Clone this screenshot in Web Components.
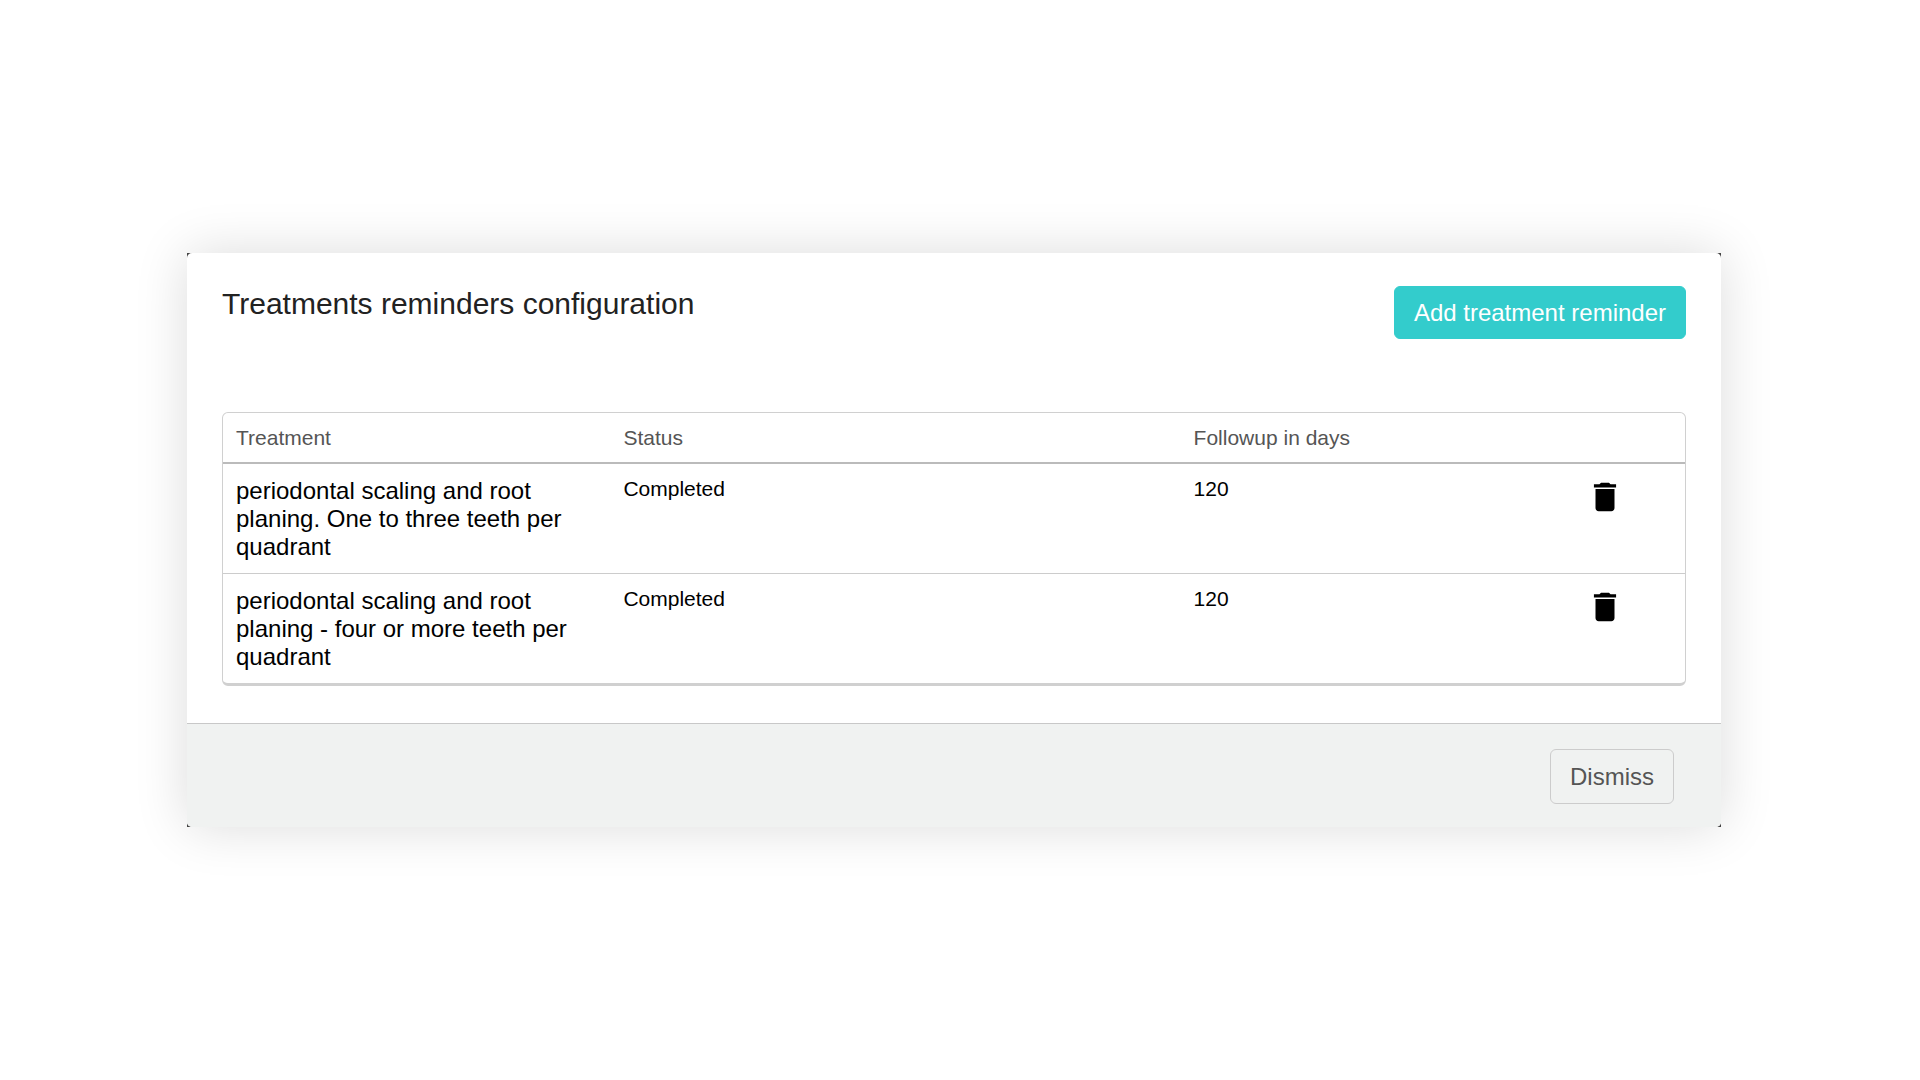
<!DOCTYPE html>
<html lang="en">
<head>
<meta charset="utf-8">
<title>Treatments reminders configuration</title>
<style>
  body { margin: 0; background: #fff; font-family: "Liberation Sans", Arial, sans-serif; }
</style>
</head>
<body>
<reminders-page>
  <modal-card>
    <span slot="title">Treatments reminders configuration</span>
    <action-button slot="action" variant="primary">Add treatment reminder</action-button>
    <reminder-table></reminder-table>
    <action-button slot="footer">Dismiss</action-button>
  </modal-card>
</reminders-page>

<template id="page-template">
  <style>
    :host { display: flex; flex-direction: column; justify-content: center; box-sizing: border-box; min-height: 100vh; padding: 24px 199px 24px 187px; }
  </style>
  <slot></slot>
</template>

<template id="card-template">
  <style>
    /* The dark host shows only behind the rounded corners of the card. */
    :host { display: block; background: #444; box-shadow: 0 0 50px rgba(0, 0, 0, .14); }
    section { border-radius: 5px; overflow: hidden; background: #fff; }
    .body { padding: 33px 35px 37px; }
    header { display: flex; justify-content: space-between; align-items: flex-start; margin-bottom: 73px; }
    h1 { margin: 0; font-size: 30px; line-height: 36px; font-weight: 400; color: #222; }
    footer { display: flex; justify-content: flex-end; padding: 25px 47px 23px; border-top: 1px solid #c8c8c8; background: #f0f2f1; }
  </style>
  <section>
    <div class="body">
      <header><h1><slot name="title"></slot></h1><slot name="action"></slot></header>
      <slot></slot>
    </div>
    <footer><slot name="footer"></slot></footer>
  </section>
</template>

<template id="button-template">
  <style>
    :host { display: block; }
    button { display: block; margin: 0; padding: 13px 19px; border: 1px solid #ccc; border-radius: 6px; background: transparent; color: #555; font: 24px/27px "Liberation Sans", Arial, sans-serif; cursor: pointer; }
    :host([variant="primary"]) button { padding: 12px 19px; border-color: #33cccc; background: #33cccc; color: #fff; }
  </style>
  <button type="button"><slot></slot></button>
</template>

<template id="table-template">
  <style>
    :host { display: block; }
    table { width: 100%; table-layout: fixed; border-collapse: separate; border-spacing: 0; border: 1px solid #d0d0d0; border-bottom-width: 3px; border-radius: 6px; }
    .treatment { width: 26.5%; }
    .status { width: 39%; }
    .followup { width: 26.8%; }
    th, td { box-sizing: border-box; padding: 13px 13px 12px; text-align: left; vertical-align: top; font-size: 21px; line-height: 24px; font-weight: 400; color: #000; }
    th { border-bottom: 2px solid #bbb; color: #555; }
    tbody tr:not(:last-child) td { border-bottom: 1px solid #ccc; }
    td:first-child { font-size: 24px; line-height: 28px; }
    button { display: block; margin: 0; padding: 1px; border: 0; background: none; color: #000; cursor: pointer; }
    svg { display: block; width: 38px; height: 38px; fill: currentColor; }
  </style>
  <table>
    <colgroup><col class="treatment"><col class="status"><col class="followup"><col></colgroup>
    <thead>
      <tr><th scope="col">Treatment</th><th scope="col">Status</th><th scope="col">Followup in days</th><th></th></tr>
    </thead>
    <tbody></tbody>
  </table>
</template>

<template id="row-template">
  <tr>
    <td></td><td></td><td></td>
    <td><button type="button" aria-label="Delete"><svg viewBox="0 0 24 24" aria-hidden="true"><path d="M6 19c0 1.1.9 2 2 2h8c1.1 0 2-.9 2-2V7H6v12zM19 4h-3.5l-1-1h-5l-1 1H5v2h14V4z"/></svg></button></td>
  </tr>
</template>

<script>
  const stamp = (id) => document.getElementById(id).content.cloneNode(true);

  class TemplateElement extends HTMLElement {
    constructor() {
      super();
      this.attachShadow({ mode: "open" }).append(stamp(this.constructor.template));
    }
  }

  class RemindersPage extends TemplateElement { static template = "page-template"; }
  class ModalCard extends TemplateElement { static template = "card-template"; }
  class ActionButton extends TemplateElement { static template = "button-template"; }

  class ReminderTable extends TemplateElement {
    static template = "table-template";
    #reminders = [
      ["periodontal scaling and root planing. One to three teeth per quadrant", "Completed", 120],
      ["periodontal scaling and root planing - four or more teeth per quadrant", "Completed", 120],
    ];
    connectedCallback() {
      this.render();
    }
    render() {
      const rows = this.#reminders.map((reminder, index) => {
        const row = stamp("row-template").querySelector("tr");
        reminder.forEach((value, i) => { row.cells[i].textContent = value; });
        row.querySelector("button").addEventListener("click", () => {
          this.#reminders.splice(index, 1);
          this.render();
        });
        return row;
      });
      this.shadowRoot.querySelector("tbody").replaceChildren(...rows);
    }
  }

  customElements.define("reminders-page", RemindersPage);
  customElements.define("modal-card", ModalCard);
  customElements.define("action-button", ActionButton);
  customElements.define("reminder-table", ReminderTable);
</script>
</body>
</html>
